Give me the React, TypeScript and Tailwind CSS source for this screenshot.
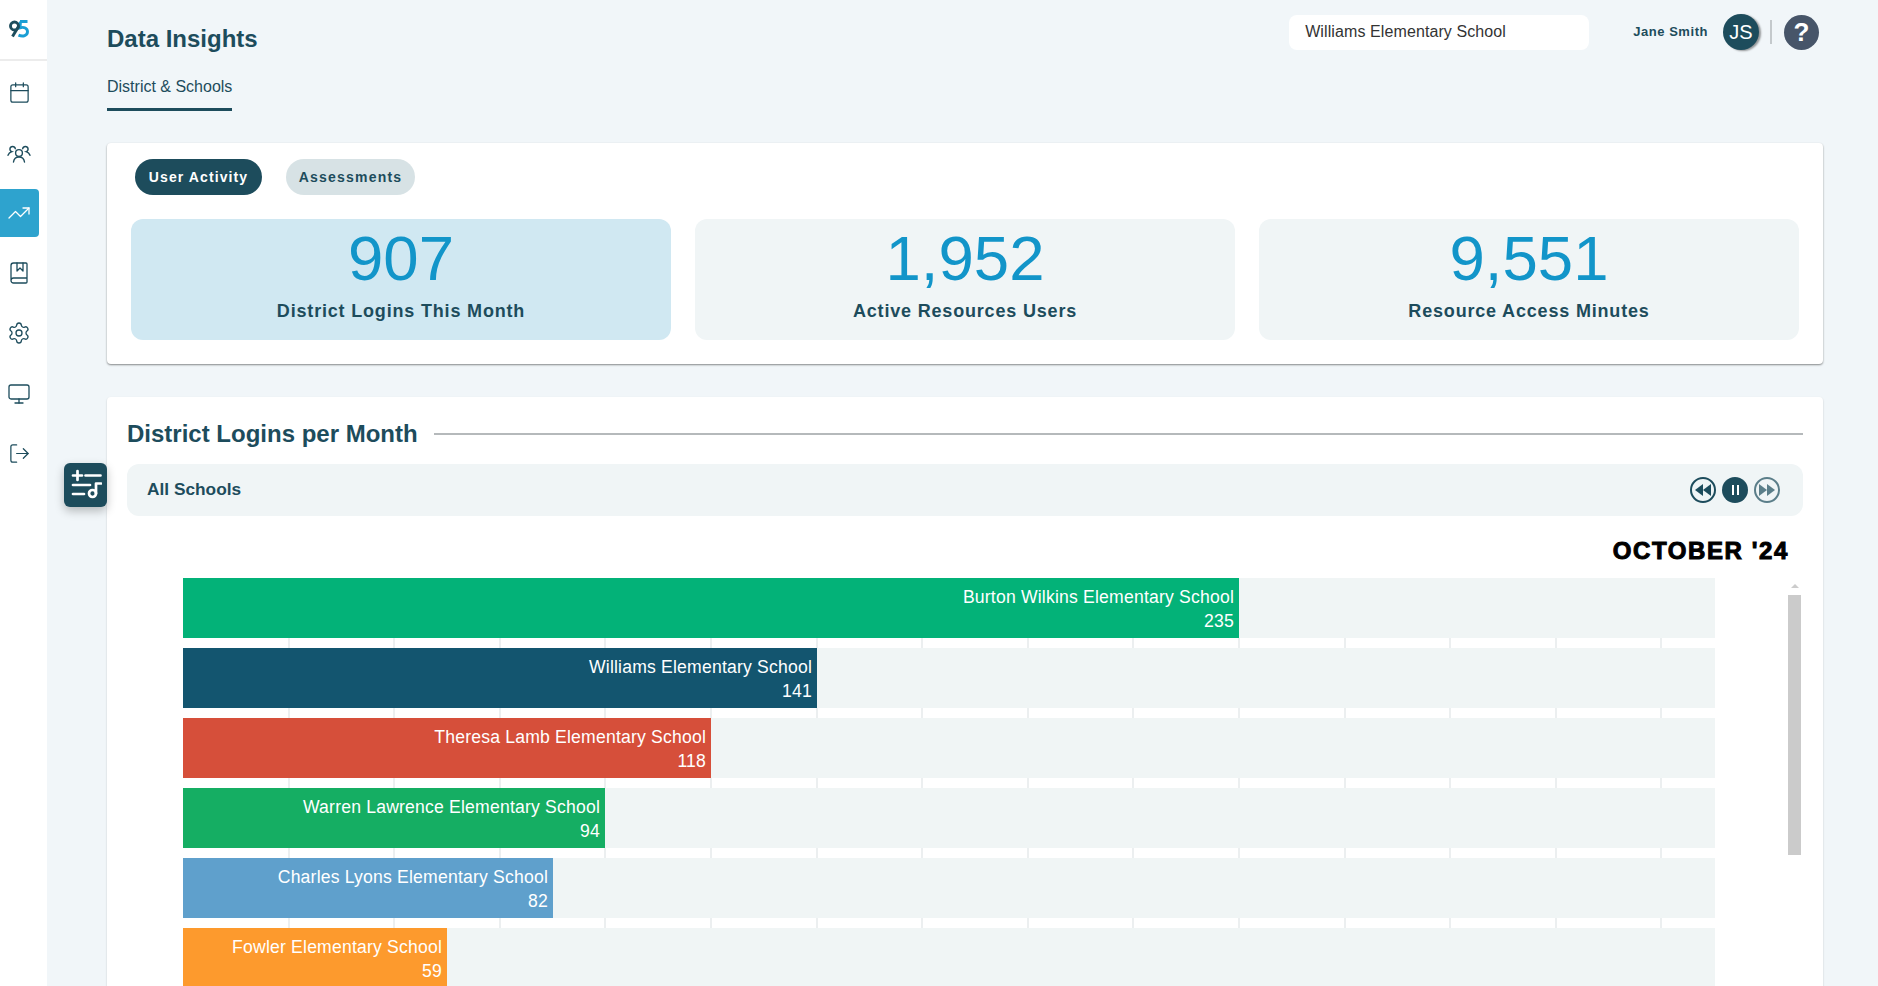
import React from 'react'
import { Calendar, TrendingUp, BookMarked, Settings, Monitor, LogOut } from 'lucide-react'

const stats = [
  { value: '907', label: 'District Logins This Month', active: true },
  { value: '1,952', label: 'Active Resources Users', active: false },
  { value: '9,551', label: 'Resource Access Minutes', active: false },
]

const schools = [
  { name: 'Burton Wilkins Elementary School', count: 235, width: 1056, color: '#03b278' },
  { name: 'Williams Elementary School', count: 141, width: 634, color: '#13556f' },
  { name: 'Theresa Lamb Elementary School', count: 118, width: 528, color: '#d64f3a' },
  { name: 'Warren Lawrence Elementary School', count: 94, width: 422, color: '#15ae63' },
  { name: 'Charles Lyons Elementary School', count: 82, width: 370, color: '#5fa0cc' },
  { name: 'Fowler Elementary School', count: 59, width: 264, color: '#fd9a2d' },
]

const ticks = Array.from({ length: 14 }, (_, i) => (i + 1) * 105.6 - 1)

const Logo = () => (
  <svg width="20" height="18" viewBox="0 0 20 18" fill="none" strokeWidth="2.900">
    <path d="M11 1.500h7.500M11.500 1.500L11 7.800c4-1.300 7.500.4 7.500 4 0 3.600-4.500 5.300-9 3.300" stroke="#1a9ed4" />
    <circle cx="5.500" cy="6" r="4" stroke="#1d4c5c" />
    <path d="M9.500 6.500L3.500 16.500" stroke="#1d4c5c" />
  </svg>
)

const PeopleIcon = () => (
  <svg width="24" height="24" viewBox="0 0 24 24" fill="none" stroke="#1d4c5c" strokeWidth="1.4" strokeLinecap="round">
    <circle cx="12" cy="12" r="3.4" />
    <path d="M6.5 21c.4-3 2.6-5 5.500-5s5.100 2 5.500 5" />
    <path d="M8.300 7.700a2.700 2.700 0 1 0-3.500 3c-1.800.6-3.200 1.900-3.800 3.600" />
    <path d="M15.700 7.700a2.700 2.700 0 1 1 3.500 3c1.800.6 3.200 1.900 3.800 3.600" />
  </svg>
)

const FilterMusicIcon = () => (
  <svg width="32" height="32" viewBox="0 0 32 32" fill="none" stroke="#fff" strokeWidth="2.700" strokeLinecap="round" strokeLinejoin="round">
    <path d="M3 6.500h9M7.500 2v9M15.500 6.500h15" />
    <path d="M3 16h17" />
    <path d="M3 25h11" />
    <circle cx="22.500" cy="24.500" r="3.500" />
    <path d="M26 24.500V14.500h5" />
  </svg>
)

const RewindIcon = ({ flip, faded }: { flip?: boolean; faded?: boolean }) => (
  <div className={`w-[26px] h-[26px] rounded-full border-2 border-[#1d4c5c] flex items-center justify-center ${faded ? 'opacity-70' : ''}`}>
    <svg width="16" height="12" viewBox="0 0 16 12" fill="#1d4c5c" className={flip ? 'rotate-180' : ''}>
      <path d="M8 0v12L0 6z" />
      <path d="M16 0v12L8 6z" />
    </svg>
  </div>
)

const NavIcon = ({ children, active }: { children: React.ReactNode; active?: boolean }) => (
  <div className={`w-[39px] h-[48px] pr-[1px] flex items-center justify-center ${active ? 'bg-[#2ea3ce] rounded-r-[4px]' : ''}`}>
    {children}
  </div>
)

export default function App() {
  const iconProps = { size: 23, strokeWidth: 1.3, color: '#1d4c5c' }

  return (
    <div className="flex h-screen overflow-hidden bg-[#f1f6f9] font-['Liberation_Sans',Arial,sans-serif] text-[#1d4c5c]">
      {/* sidebar */}
      <aside className="w-[47px] shrink-0 bg-white">
        <div className="h-[61px] border-b-2 border-[#ececec] flex items-center pl-[9px] pb-[2px]">
          <Logo />
        </div>
        <div className="flex flex-col gap-[12px] pt-[8px]">
          <NavIcon><Calendar {...iconProps} className="-mt-[2px]" /></NavIcon>
          <NavIcon><PeopleIcon /></NavIcon>
          <NavIcon active><TrendingUp size={24} strokeWidth={1.3} color="#fff" /></NavIcon>
          <NavIcon><BookMarked size={24} strokeWidth={1.3} color="#1d4c5c" /></NavIcon>
          <NavIcon><Settings size={24} strokeWidth={1.3} color="#1d4c5c" /></NavIcon>
          <NavIcon><Monitor size={24} strokeWidth={1.3} color="#1d4c5c" className="mt-[1px]" /></NavIcon>
          <NavIcon><LogOut {...iconProps} /></NavIcon>
        </div>
      </aside>

      <main className="flex-1 min-w-0 pl-[60px] pr-[55px] relative">
        {/* floating filter button */}
        <div className="absolute left-[17px] top-[463px] z-10 w-[43px] h-[44px] bg-[#1d4c5c] rounded-[6px] flex items-center justify-center shadow-[0_4px_10px_rgba(0,0,0,0.25)]">
          <FilterMusicIcon />
        </div>

        {/* header */}
        <header className="flex justify-between items-start">
          <div className="pt-[25px]">
            <h1 className="text-[24px] leading-[28px] font-bold">Data Insights</h1>
            <div className="mt-[24px] inline-block pb-[11px] border-b-[3px] border-[#1d4c5c] text-[16px] leading-[20px]">
              District &amp; Schools
            </div>
          </div>
          <div className="flex items-center pt-[14px] pr-[4px]">
            <div className="w-[300px] h-[35px] bg-white rounded-[8px] pl-[16px] flex items-center text-[16px] tracking-[0.1px] text-[#333]">
              Williams Elementary School
            </div>
            <span className="ml-[44px] text-[13px] font-bold tracking-[0.55px]">Jane Smith</span>
            <div className="ml-[15px] w-[36px] h-[36px] rounded-full bg-[#1d4c5c] text-white text-[20px] flex items-center justify-center shadow-[2px_1px_2px_rgba(0,0,0,0.4)]">
              JS
            </div>
            <div className="ml-[11px] w-[2px] h-[24px] bg-[#c4c9cc]" />
            <div className="ml-[12px] w-[35px] h-[35px] rounded-full bg-[#475569] text-white text-[26px] font-bold flex items-center justify-center">
              ?
            </div>
          </div>
        </header>

        {/* summary card */}
        <section className="mt-[32px] bg-white rounded-[4px] shadow-[0_1px_2px_rgba(0,0,0,0.45)] pt-[16px] pb-[24px] px-[24px]">
          <div className="flex gap-[24px] pl-[4px]">
            <button className="h-[36px] w-[127px] rounded-full bg-[#1d4c5c] text-white text-[14px] font-bold tracking-[1.1px]">User Activity</button>
            <button className="h-[36px] w-[129px] rounded-full bg-[#d7e2e5] text-[14px] font-bold tracking-[1.2px]">Assessments</button>
          </div>
          <div className="mt-[24px] grid grid-cols-3 gap-[24px]">
            {stats.map((s) => (
              <div key={s.label} className={`h-[121px] rounded-[12px] flex flex-col items-center pt-[3px] ${s.active ? 'bg-[#d0e8f2]' : 'bg-[#f0f5f6]'}`}>
                <div className="text-[63.5px] leading-[72px] text-[#1295c9]">{s.value}</div>
                <div className="mt-[5px] text-[18px] leading-[24px] font-bold tracking-[0.82px]">{s.label}</div>
              </div>
            ))}
          </div>
        </section>

        {/* logins chart */}
        <section className="mt-[33px] bg-white rounded-t-[4px] shadow-[0_1px_2px_rgba(0,0,0,0.2)] px-[20px] pt-[23px] h-[700px]">
          <div className="flex items-center gap-[16px]">
            <h2 className="text-[24px] leading-[28px] font-bold whitespace-nowrap">District Logins per Month</h2>
            <div className="flex-1 h-[2px] bg-[#b5b9bb]" />
          </div>
          <div className="mt-[16px] h-[52px] rounded-[12px] bg-[#f0f5f6] pl-[20px] pr-[23px] flex items-center justify-between">
            <span className="text-[17.3px] font-bold -mt-[1px]">All Schools</span>
            <div className="flex gap-[6px]">
              <RewindIcon />
              <div className="w-[26px] h-[26px] rounded-full bg-[#1d4c5c] flex items-center justify-center gap-[3px]">
                <span className="w-[2px] h-[10px] bg-white" />
                <span className="w-[2px] h-[10px] bg-white" />
              </div>
              <RewindIcon flip faded />
            </div>
          </div>
          <div className="mt-[21px] h-[28px] pr-[14px] text-right text-[24px] leading-[28px] font-bold tracking-[1.6px] text-black [-webkit-text-stroke:1px_black]">
            OCTOBER '24
          </div>
          <div className="relative mt-[13px] pl-[56px] pr-[88px]">
            <div className="absolute left-[56px] top-0 bottom-0">
              {ticks.map((t) => (
                <div key={t} className="absolute top-0 bottom-0 w-[2px] bg-[#eceff0]" style={{ left: t }} />
              ))}
            </div>
            <div className="relative flex flex-col gap-[10px]">
              {schools.map((s) => (
                <div key={s.name} className="h-[60px] bg-[#f0f5f5]">
                  <div
                    className="h-full pt-[7px] pr-[5px] text-right text-white text-[17.6px] tracking-[0.19px] leading-[24px] whitespace-nowrap"
                    style={{ width: s.width, backgroundColor: s.color }}
                  >
                    <div>{s.name}</div>
                    <div>{s.count}</div>
                  </div>
                </div>
              ))}
            </div>
            {/* scrollbar */}
            <div className="absolute right-[2px] top-[6px] w-[13px]">
              <div className="mx-auto w-0 h-0 border-x-[4px] border-x-transparent border-b-[4px] border-b-[#ccc]" />
              <div className="mt-[7px] w-[13px] h-[260px] bg-[#cbcbcb]" />
            </div>
          </div>
        </section>
      </main>
    </div>
  )
}
